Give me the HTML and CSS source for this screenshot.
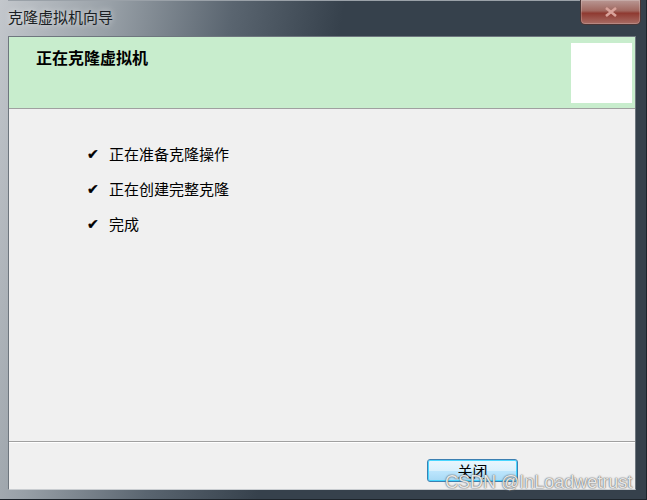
FILE: index.html
```html
<!doctype html>
<html lang="zh-CN">
  <head>
    <meta charset="UTF-8" />
    <meta name="viewport" content="width=device-width, initial-scale=1.0" />
    <title>克隆虚拟机向导</title>
    <link rel="stylesheet" href="styles.css">
  </head>
  <body>
    <div class="window">
      <div class="titlebar">
        <span class="title">克隆虚拟机向导</span>
        <button class="close" aria-label="关闭">
          <svg width="14" height="10" viewBox="0 0 14 10">
            <path d="M2 1 L12 9 M12 1 L2 9" stroke="#d9a39b" stroke-width="2.6" fill="none" />
          </svg>
        </button>
      </div>
      <div class="client">
        <div class="header">
          <h1 class="heading">正在克隆虚拟机</h1>
          <div class="logo-box"></div>
        </div>
        <div class="body">
          <ul class="steps">
            <li><span class="check">✔</span>正在准备克隆操作</li>
            <li><span class="check">✔</span>正在创建完整克隆</li>
            <li><span class="check">✔</span>完成</li>
          </ul>
        </div>
        <div class="footer">
          <button class="btn">关闭</button>
        </div>
      </div>
      <div class="watermark">CSDN @InLoadwetrust</div>
    </div>
  </body>
</html>
```

FILE: styles.css
```css
body {
  margin: 0;
  width: 647px;
  height: 500px;
  overflow: hidden;
  font-family: "Noto Sans CJK SC", "Noto Sans", sans-serif;
}

.window {
  position: relative;
  height: 500px;
  box-sizing: border-box;
  padding: 0 10px 9px 8px;
  display: flex;
  flex-direction: column;
  background: linear-gradient(100deg, #c3c7cc 0, #98a0a7 110px, #5a6570 230px, #36414c 340px, #36414c 100%);
  border-right: 1px solid #1d242b;
  border-bottom: 1px solid #1d242b;
}

.titlebar {
  height: 36px;
  flex: none;
  display: flex;
  align-items: flex-start;
  justify-content: space-between;
  border-top: 1px solid #9aa1a8;
  box-sizing: border-box;
}

.title {
  margin-top: 5px;
  font-size: 15px;
  color: #1b1f24;
  text-shadow: 0 0 6px rgba(255, 255, 255, 0.7);
}

.close {
  margin: -1px -5px 0 0;
  width: 61px;
  height: 25px;
  border: 1px solid #4a3535;
  border-top: none;
  border-radius: 0 0 5px 5px;
  background: linear-gradient(#b99894 0, #a0675f 45%, #8f3a31 55%, #a86d65 100%);
  box-shadow: inset 0 0 0 1px rgba(255, 255, 255, 0.2);
  display: flex;
  align-items: center;
  justify-content: center;
  padding: 0;
}

.client {
  flex: 1;
  display: flex;
  flex-direction: column;
  background: #f0f0f0;
  border: 1px solid #6e767e;
  border-bottom-color: #c8ccd0;
}

.header {
  height: 72px;
  flex: none;
  box-sizing: border-box;
  background: #c8edcd;
  border-bottom: 1px solid #a0a0a0;
  display: flex;
  justify-content: space-between;
  padding: 6px 3px 0 27px;
}

.heading {
  margin: 2px 0 0;
  font-size: 16px;
  font-weight: bold;
  color: #000;
}

.logo-box {
  width: 61px;
  height: 60px;
  background: #fff;
}

.body {
  flex: 1;
  border-bottom: 1px solid #a0a0a0;
  box-shadow: 0 1px 0 #fff;
}

.steps {
  list-style: none;
  margin: 34px 0 0 78px;
  padding: 0;
  font-size: 15px;
  color: #000;
}

.steps li {
  height: 35px;
  line-height: 22px;
  display: flex;
  align-items: flex-start;
}

.check {
  width: 22px;
  font-size: 14px;
  font-family: "DejaVu Sans", sans-serif;
  -webkit-text-stroke: 0.4px #000;
}

.footer {
  height: 47px;
  flex: none;
  display: flex;
  justify-content: flex-end;
  align-items: flex-start;
  padding: 17px 117px 0 0;
  box-sizing: border-box;
}

.btn {
  width: 91px;
  height: 23px;
  padding: 0;
  font-family: "Noto Sans CJK SC", sans-serif;
  font-size: 15px;
  line-height: 18px;
  color: #000;
  border: 1px solid #3c7fb1;
  border-radius: 3px;
  background: linear-gradient(#eaf6fd 0, #d9f0fc 50%, #bee6fd 51%, #a7d9f5 100%);
  box-shadow: inset 0 0 0 1px #48d6ff;
}

.watermark {
  position: absolute;
  left: 445px;
  top: 472px;
  font-family: "Liberation Sans", Arial, sans-serif;
  font-size: 18px;
  color: rgba(255, 255, 255, 0.85);
  text-shadow: 0 0 1px #555, 0 0 2px #777;
}
```
